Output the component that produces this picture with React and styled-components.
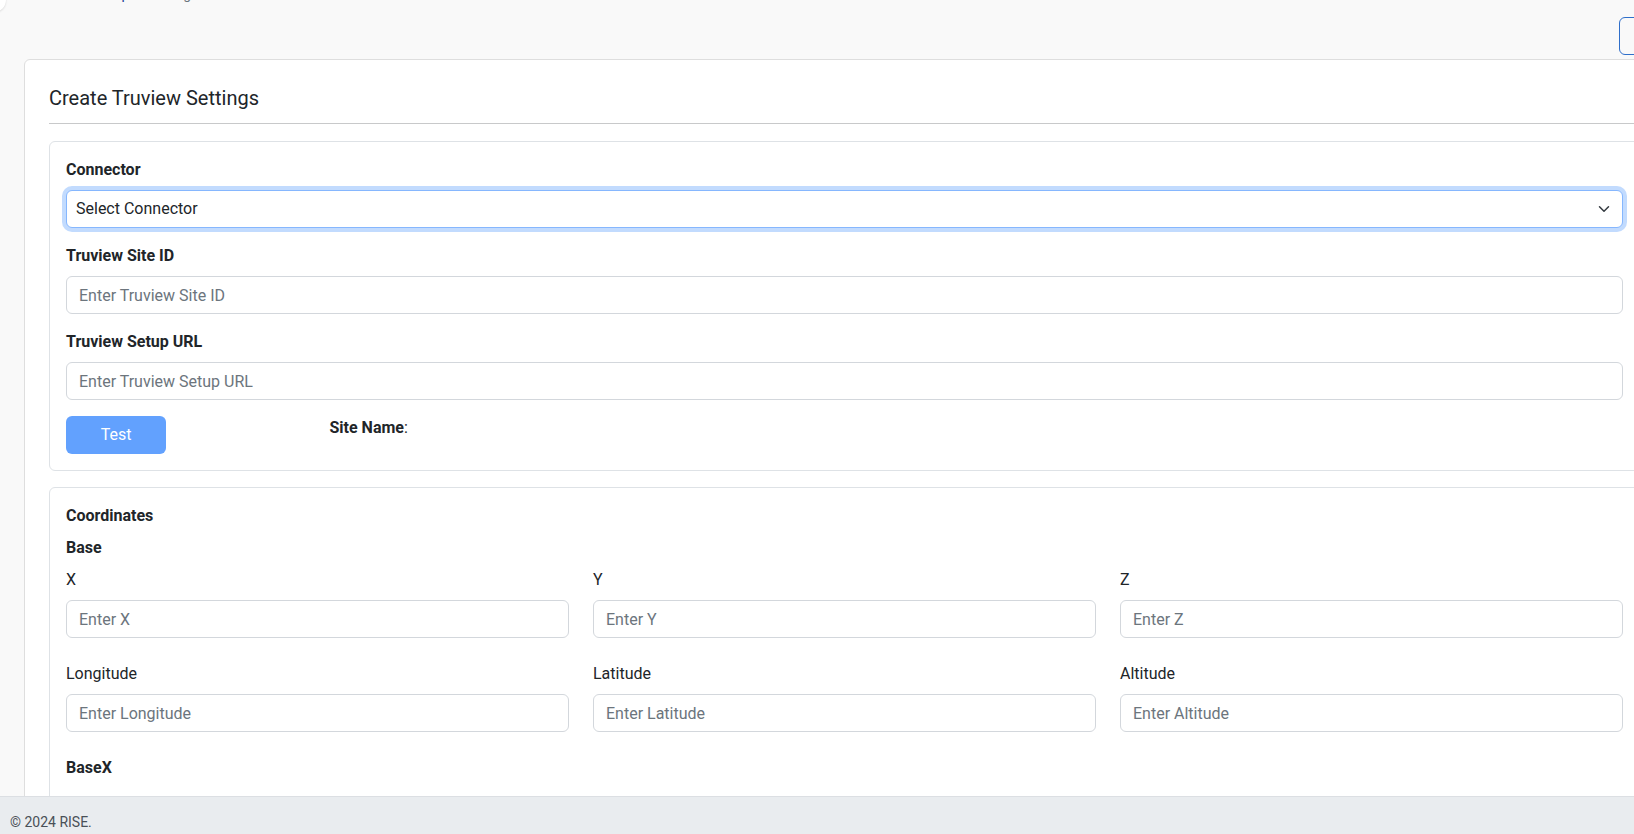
import React from "react";
import styled, { createGlobalStyle } from "styled-components";

const GlobalStyle = createGlobalStyle`
  html, body {
    margin: 0;
    padding: 0;
    height: 834px;
    overflow: hidden;
    background: #f9f9f9;
  }
  body {
    font-family: "Segoe UI", Roboto, "Liberation Sans", sans-serif;
    font-size: 16px;
    line-height: 1.5;
    color: #212529;
  }
  * {
    box-sizing: border-box;
  }
`;

const Page = styled.div`
  width: 1690px;
  padding: 0 25px 0 24px;
`;

const TopBar = styled.div`
  display: flex;
  align-items: flex-end;
  height: 34px;
  margin: -22px 0 0 -24px;
`;

const ToggleCap = styled.div`
  width: 30px;
  height: 34px;
  margin-left: -24px;
  background: #fff;
  border-radius: 0 0 12px 0;
  box-shadow: 0 1px 2px rgba(0, 0, 0, 0.12);
`;

const Crumbs = styled.div`
  display: flex;
  align-items: center;
  gap: 6px;
  margin: 0 0 8px 24px;
  font-size: 14px;
  line-height: 20px;
  color: #6c757d;

  a {
    color: #1f3f94;
    text-decoration: none;
  }
`;

const ActionRow = styled.div`
  display: flex;
  justify-content: flex-end;
  margin: 5px 0 4px;
`;

const OutlineButton = styled.button`
  width: 46px;
  height: 38px;
  border: 1px solid #2f6fca;
  border-radius: 6px;
  background: transparent;
  color: #2f6fca;
  padding: 0;
`;

const Card = styled.div`
  background: #fff;
  border: 1px solid #dedede;
  border-radius: 6px;
  padding: 26px 24px 24px;
`;

const CardTitle = styled.h5`
  margin: 0;
  font-size: 20px;
  font-weight: 400;
  line-height: 1.2;
  padding-bottom: 13px;
  border-bottom: 1px solid #c8c9ca;
  margin-bottom: 17px;
`;

const Section = styled.div`
  border: 1px solid #dee2e6;
  border-radius: 6px;
  padding: 16px;
  margin-bottom: 16px;
`;

const Group = styled.div`
  margin-bottom: 16px;
`;

const Label = styled.label`
  display: block;
  margin-bottom: 8px;
  font-weight: ${(p) => (p.$bold ? 700 : 400)};
`;

const Heading = styled.div`
  font-weight: 700;
  margin-bottom: ${(p) => p.$gap || 8}px;
`;

const Input = styled.input`
  display: block;
  width: 100%;
  height: 38px;
  padding: 6px 12px;
  font: inherit;
  color: #212529;
  background: #fff;
  border: 1px solid #d3d7dc;
  border-radius: 6px;
  outline: none;

  &::placeholder {
    color: #6c757d;
  }
`;

const SelectWrap = styled.div`
  position: relative;
`;

const Select = styled.select`
  display: block;
  width: 100%;
  height: 38px;
  padding: 6px 36px 6px 9px;
  font: inherit;
  color: #212529;
  background: #fff;
  border: 1px solid #86b7fe;
  border-radius: 6px;
  box-shadow: 0 0 0 4px rgba(13, 110, 253, 0.25);
  appearance: none;
  outline: none;
`;

const Chevron = styled.svg`
  position: absolute;
  right: 13px;
  top: 13px;
  pointer-events: none;
`;

const ActionGrid = styled.div`
  display: grid;
  grid-template-columns: repeat(12, 1fr);
  column-gap: 24px;
`;

const TestButton = styled.button`
  grid-column: span 2;
  width: 100px;
  height: 38px;
  border: none;
  border-radius: 6px;
  background: rgb(98, 161, 254);
  color: #fff;
  font: inherit;
`;

const SiteName = styled.div`
  grid-column: span 10;

  b {
    font-weight: 700;
  }
`;

const FieldGrid = styled.div`
  display: grid;
  grid-template-columns: repeat(3, 1fr);
  gap: 24px;
  margin-bottom: 24px;
`;

const Footer = styled.footer`
  position: fixed;
  left: 0;
  right: 0;
  bottom: 0;
  height: 38px;
  padding: 15px 10px 0;
  background: #e9ecef;
  border-top: 1px solid #dcdfe3;
  font-size: 14px;
  line-height: 21px;
  color: #495057;
`;

const baseFields = [
  { name: "X" },
  { name: "Y" },
  { name: "Z" },
  { name: "Longitude" },
  { name: "Latitude" },
  { name: "Altitude" },
];

const offsetFields = [{ name: "X" }, { name: "Y" }, { name: "Z" }];

const FieldSet = ({ fields }) => (
  <FieldGrid>
    {fields.map((f) => (
      <div key={f.name}>
        <Label>{f.name}</Label>
        <Input placeholder={`Enter ${f.name}`} />
      </div>
    ))}
  </FieldGrid>
);

export default function App() {
  return (
    <>
      <GlobalStyle />
      <Page>
        <TopBar>
          <ToggleCap />
          <Crumbs>
            <a href="#">⌂ Truview Setup</a>
            <span>/</span>
            <span>Settings</span>
          </Crumbs>
        </TopBar>
        <ActionRow>
          <OutlineButton aria-label="back" />
        </ActionRow>
        <Card>
          <CardTitle>Create Truview Settings</CardTitle>

          <Section>
            <Group>
              <Label $bold>Connector</Label>
              <SelectWrap>
                <Select defaultValue="">
                  <option value="">Select Connector</option>
                </Select>
                <Chevron width="12" height="12" viewBox="0 0 16 16">
                  <path
                    d="M2 5l6 6 6-6"
                    fill="none"
                    stroke="#343a40"
                    strokeWidth="2"
                    strokeLinecap="round"
                    strokeLinejoin="round"
                  />
                </Chevron>
              </SelectWrap>
            </Group>
            <Group>
              <Label $bold>Truview Site ID</Label>
              <Input placeholder="Enter Truview Site ID" />
            </Group>
            <Group>
              <Label $bold>Truview Setup URL</Label>
              <Input placeholder="Enter Truview Setup URL" />
            </Group>
            <ActionGrid>
              <TestButton disabled>Test</TestButton>
              <SiteName>
                <b>Site Name</b>:
              </SiteName>
            </ActionGrid>
          </Section>

          <Section>
            <Heading>Coordinates</Heading>
            <Heading>Base</Heading>
            <FieldSet fields={baseFields} />
            <Heading $gap={16}>BaseX</Heading>
            <FieldSet fields={offsetFields} />
          </Section>
        </Card>
      </Page>
      <Footer>© 2024 RISE.</Footer>
    </>
  );
}
